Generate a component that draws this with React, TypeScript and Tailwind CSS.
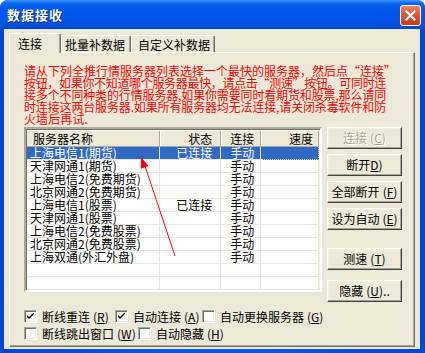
import React, { useLayoutEffect, useRef, useState } from "react";

const rows: [string, string, string][] = [
  ["上海电信1(期货)", "已连接", "手动"],
  ["天津网通1(期货)", "", "手动"],
  ["上海电信2(免费期货)", "", "手动"],
  ["北京网通2(免费期货)", "", "手动"],
  ["上海电信1(股票)", "已连接", "手动"],
  ["天津网通1(股票)", "", "手动"],
  ["上海电信2(免费股票)", "", "手动"],
  ["北京网通2(免费股票)", "", "手动"],
  ["上海双通(外汇外盘)", "", "手动"],
  ["", "", ""],
  ["", "", ""],
];

const lines: [string, number][] = [
  ["请从下列全推行情服务器列表选择一个最快的服务器，然后点“连接”", 372],
  ["按钮，如果你不知道哪个服务器最快，请点击“测速”按钮。可同时连", 362],
  ["接多个不同种类的行情服务器,如果你需要同时看期货和股票,那么请同", 362],
  ["时连接这两台服务器.如果所有服务器均无法连接,请关闭杀毒软件和防", 362],
  ["火墙后再试.", 64],
];

function FitLine({ text, target }: { text: string; target: number }) {
  const ref = useRef<HTMLSpanElement>(null);
  const [ls, setLs] = useState(0);
  useLayoutEffect(() => {
    const measure = () => {
      const el = ref.current;
      if (!el) return;
      const prev = el.style.letterSpacing;
      el.style.letterSpacing = "0px";
      const w = el.getBoundingClientRect().width;
      el.style.letterSpacing = prev;
      const n = Array.from(text).length;
      setLs((target - w) / n);
    };
    measure();
    if (document.fonts && document.fonts.ready) document.fonts.ready.then(measure);
  }, [text, target]);
  return (
    <div className="h-[12px] whitespace-nowrap">
      <span ref={ref} style={{ letterSpacing: `${ls}px` }}>
        {text}
      </span>
    </div>
  );
}

function Btn({ label, k, tail, disabled, mt }: { label: string; k: string; tail?: string; disabled?: boolean; mt: string }) {
  return (
    <div
      className={`${mt} w-[75px] h-[22px] flex items-center justify-center border border-t-white border-l-white border-r-[#404040] border-b-[#404040] shadow-[inset_-1px_-1px_0_#ACA899,inset_1px_1px_0_#F1EFE2] bg-[#ECE9D8] text-[12px] leading-none ${
        disabled ? "text-[#ACA899] [text-shadow:1px_1px_0_#fff]" : "text-black"
      }`}
    >
      <span>{label}</span>
      {k === "D" ? (
        <span>
          <u>D</u>)
        </span>
      ) : (
        <span className="ml-[3px]">
          (<u>{k}</u>){tail}
        </span>
      )}
    </div>
  );
}

function Check({ checked }: { checked?: boolean }) {
  return (
    <div className="w-[13px] h-[13px] shrink-0 border border-t-[#ACA899] border-l-[#ACA899] border-r-white border-b-white shadow-[inset_1px_1px_0_#716F64,inset_-1px_-1px_0_#F1EFE2] bg-white flex items-center justify-center">
      {checked && (
        <svg width="7" height="7" viewBox="0 0 7 7">
          <path d="M0 2 L0 4 L2 6 L2 4 Z M2 4 L7 -1 L7 1 L2 6Z" fill="#000" />
        </svg>
      )}
    </div>
  );
}

function CheckItem({ label, k, checked, w }: { label: string; k: string; checked?: boolean; w: string }) {
  return (
    <div className={`${w} flex items-center h-[13px]`}>
      <Check checked={checked} />
      <span className="ml-[5px] text-[12px] leading-none text-black whitespace-nowrap">
        {label}
        <span className="ml-[3px]">
          (<u>{k}</u>)
        </span>
      </span>
    </div>
  );
}

export default function App() {
  return (
    <div className="relative w-[425px] h-[353px] flex flex-col rounded-t-[8px] overflow-hidden bg-[linear-gradient(to_right,#0046D5,#0058EE_40%,#0058EE_60%,#0046D5)] font-['Noto_Sans_CJK_SC','Noto_Sans',sans-serif]">
      {/* title bar */}
      <div className="h-[29px] shrink-0 flex items-center pl-[7px] pr-[4px] bg-[linear-gradient(to_bottom,#3D95FF_0%,#0A66F0_12%,#0058EE_30%,#0055EA_70%,#0050DE_88%,#0046C8_100%)]">
        <span className="text-white font-bold text-[13px] leading-none tracking-[1px] [text-shadow:1px_1px_0_#0A1E7A]">
          数据接收
        </span>
        <div className="ml-auto mt-[1px] w-[21px] h-[21px] rounded-[3px] border border-white bg-[linear-gradient(to_bottom,#E98868,#DE5A38_40%,#C63C1C)] flex items-center justify-center">
          <svg width="11" height="11" viewBox="0 0 11 11">
            <path d="M1.5 1.5 L9.5 9.5 M9.5 1.5 L1.5 9.5" stroke="#fff" strokeWidth="2.2" strokeLinecap="square" />
          </svg>
        </div>
      </div>

      {/* body */}
      <div className="flex-1 ml-[4px] mr-[5px] mb-[4px] bg-[#ECE9D8] flex flex-col pl-[5px] pr-[5px] pt-[4px] pb-[2px]">
        {/* tabs */}
        <div className="h-[19px] flex items-end relative z-10">
          <div className="w-[52px] h-[20px] -mb-[1px] bg-[#ECE9D8] border-l border-t border-white border-r border-r-[#716F64] rounded-t-[2px] shadow-[inset_-1px_0_0_#ACA899] flex items-start pl-[8px] pt-[3px] text-[12px] leading-[14px] text-black">
            连接
          </div>
          <div className="w-[70px] h-[17px] bg-[#ECE9D8] border-l border-t border-white border-r border-r-[#716F64] rounded-t-[2px] shadow-[inset_-1px_0_0_#ACA899] flex items-start pl-[3px] pt-[2px] text-[12px] leading-[14px] text-black">
            批量补数据
          </div>
          <div className="w-[84px] h-[17px] bg-[#ECE9D8] border-l border-t border-white border-r border-r-[#716F64] rounded-t-[2px] shadow-[inset_-1px_0_0_#ACA899] flex items-start pl-[6px] pt-[2px] text-[12px] leading-[14px] text-black">
            自定义补数据
          </div>
        </div>

        {/* panel */}
        <div className="flex-1 border border-t-white border-l-white border-r-[#716F64] border-b-[#716F64] shadow-[inset_-1px_-1px_0_#ACA899] flex flex-col pl-[14px] pt-[12px]">
          <div className="text-[12px] leading-[12px] text-[#FF0000]">
            {lines.map(([t, w], i) => (
              <FitLine key={i} text={t} target={w} />
            ))}
          </div>

          <div className="mt-[2px] flex">
            {/* list */}
            <div className="w-[298px] h-[165px] border-2 border-t-[#ACA899] border-l-[#ACA899] border-r-white border-b-white shadow-[inset_1px_1px_0_#716F64,inset_-1px_-1px_0_#F1EFE2] bg-white p-[1px] flex flex-col overflow-hidden">
              <div className="h-[17px] shrink-0 flex bg-[#ECE9D8] border-t border-t-white border-b border-b-[#ACA899] text-[12px] leading-[15px] text-black">
                <div className="w-[133px] pl-[6px] border-r border-r-[#ACA899] shadow-[1px_0_0_#fff]">服务器名称</div>
                <div className="w-[62px] pr-[8px] text-right border-r border-r-[#ACA899] shadow-[1px_0_0_#fff]">状态</div>
                <div className="w-[40px] pl-[9px] border-r border-r-[#ACA899] shadow-[1px_0_0_#fff]">连接</div>
                <div className="w-[58px] pr-[5px] text-right border-r border-r-[#ACA899]">速度</div>
              </div>
              {rows.map((r, i) => {
                const sel = i === 0;
                return (
                  <div key={i} className="h-[13px] shrink-0 flex text-[12px] leading-[12px]">
                    <div className={`w-[133px] pl-[3px] border-r border-b border-[#EAE8DC] whitespace-nowrap ${sel ? "bg-[#316AC5] text-white" : "text-black"}`}>{r[0]}</div>
                    <div className={`w-[62px] pr-[8px] text-right border-r border-b border-[#EAE8DC] ${sel ? "bg-[#316AC5] text-white" : "text-black"}`}>{r[1]}</div>
                    <div className={`w-[40px] pl-[9px] border-r border-b border-[#EAE8DC] ${sel ? "bg-[#316AC5] text-white" : "text-black"}`}>{r[2]}</div>
                    <div className={`w-[58px] border-r border-b border-[#EAE8DC] ${sel ? "bg-[#316AC5] border-r-[#E8C070] border-dotted" : ""}`}></div>
                  </div>
                );
              })}
            </div>

            {/* buttons */}
            <div className="ml-[5px] flex flex-col">
              <Btn mt="mt-0" label="连接" k="C" disabled />
              <Btn mt="mt-[5px]" label="断开" k="D" />
              <Btn mt="mt-[5px]" label="全部断开" k="F" />
              <Btn mt="mt-[5px]" label="设为自动" k="E" />
              <Btn mt="mt-[18px]" label="测速" k="T" />
              <Btn mt="mt-[10px]" label="隐藏" k="U" tail=".." />
            </div>
          </div>

          {/* checkboxes */}
          <div className="mt-[8px] flex">
            <CheckItem w="w-[91px]" label="断线重连" k="R" checked />
            <CheckItem w="w-[87px]" label="自动连接" k="A" checked />
            <CheckItem w="w-[150px]" label="自动更换服务器" k="G" />
          </div>
          <div className="mt-[4px] flex">
            <CheckItem w="w-[114px]" label="断线跳出窗口" k="W" />
            <CheckItem w="w-[120px]" label="自动隐藏" k="H" />
          </div>
        </div>
      </div>

      {/* annotation arrow */}
      <svg className="absolute left-0 top-0 pointer-events-none" width="425" height="353">
        <line x1="175" y1="256" x2="145" y2="166" stroke="#FF0000" strokeWidth="1" />
        <polygon points="141,157 148.5,166 140.8,168.7" fill="#FF0000" />
      </svg>
    </div>
  );
}
